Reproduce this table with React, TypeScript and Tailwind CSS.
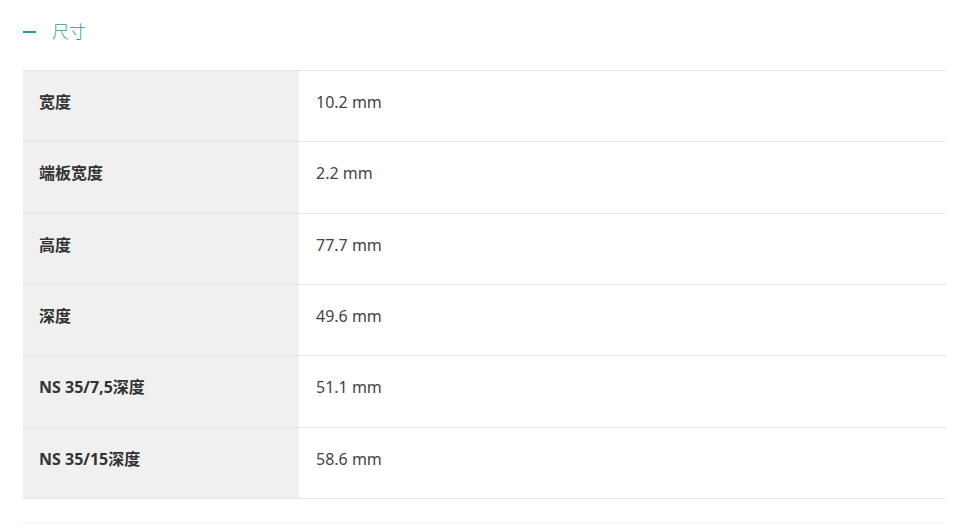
const rows = [
  { label: "宽度", value: "10.2 mm" },
  { label: "端板宽度", value: "2.2 mm" },
  { label: "高度", value: "77.7 mm" },
  { label: "深度", value: "49.6 mm" },
  { label: "NS 35/7,5深度", value: "51.1 mm" },
  { label: "NS 35/15深度", value: "58.6 mm" },
];

const font = { fontFamily: '"Noto Sans", "Noto Sans CJK SC", sans-serif' };

export default function App() {
  return (
    <div className="bg-white w-[960px] h-[524px] overflow-hidden pl-[23px] pr-[14px]" style={font}>
      <div className="flex items-center h-[70px] pb-[6px]">
        <span className="block w-[13px] h-[2px] bg-[#2a9a9a]" />
        <span className="ml-[16px] text-[17px] leading-[24px] font-light text-[#2a9a9a]">尺寸</span>
      </div>
      <div className="border-t border-[#e3e3e8]">
        {rows.map((row) => (
          <div key={row.label} className="flex h-[71.33px] border-b border-[#e3e3e8]">
            <div className="w-[276px] bg-[#f0f0f0] pt-[19px] pl-[16px] text-[16px] leading-[24px] font-bold text-[#333]">
              {row.label}
            </div>
            <div className="flex-1 pt-[19px] pl-[17px] text-[16px] leading-[24px] text-[#444]">{row.value}</div>
          </div>
        ))}
      </div>
      <div className="mt-[24px] border-t border-[#f2f2f2]" />
    </div>
  );
}
